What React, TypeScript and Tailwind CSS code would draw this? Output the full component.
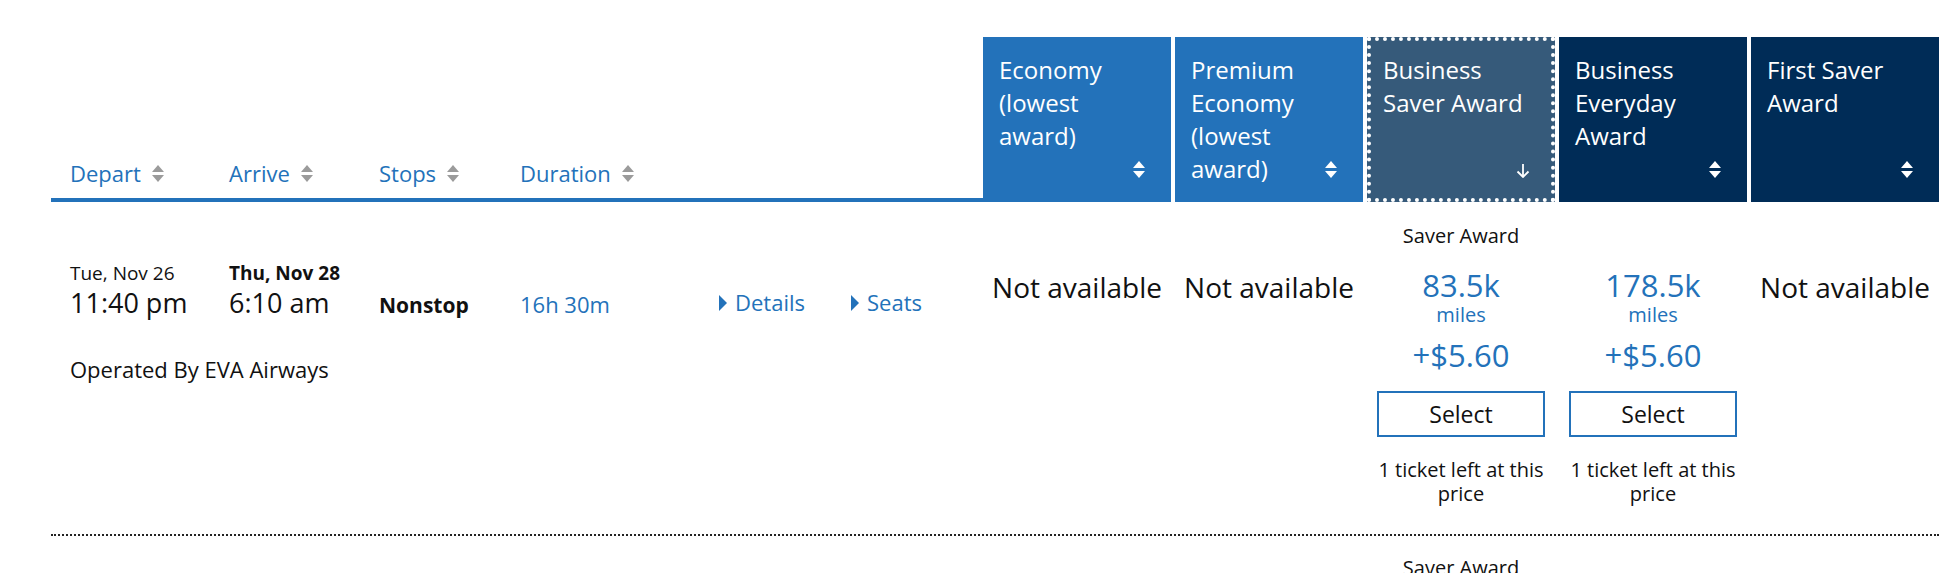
import type { ReactNode } from 'react'

const font = "font-['Open_Sans','Liberation_Sans',sans-serif]"

function SortIcon({ className }: { className?: string }) {
  return (
    <svg width="12" height="17" viewBox="0 0 12 17" fill="currentColor" className={className}>
      <path d="M6 0L12 7H0Z" />
      <path d="M0 10H12L6 17Z" />
    </svg>
  )
}

function DownArrow({ className }: { className?: string }) {
  return (
    <svg width="14" height="14" viewBox="0 0 14 14" fill="none" stroke="currentColor" strokeWidth="1.8" className={className}>
      <path d="M7 0V13" />
      <path d="M1.5 7.5L7 13L12.5 7.5" />
    </svg>
  )
}

function Caret() {
  return (
    <svg width="8" height="16" viewBox="0 0 8 16" fill="#2372ba" className="inline-block align-middle mr-[8px] relative -top-[2px]">
      <path d="M0 0L8 8L0 16Z" />
    </svg>
  )
}

type HeadProps = { children: ReactNode; tone: 'blue' | 'slate' | 'navy'; sorted?: boolean }

function HeadBox({ children, tone, sorted }: HeadProps) {
  const bg =
    tone === 'blue' ? 'bg-[#2372ba]' : tone === 'slate' ? 'bg-[#365a7a] border-4 border-dotted border-white' : 'bg-[#002c57]'
  return (
    <div
      className={`relative w-[188px] h-[165px] text-white text-[24px] leading-[33px] ${bg} ${
        tone === 'slate' ? 'px-[12px] pt-[12px]' : 'px-[16px] pt-[16px]'
      }`}
    >
      {children}
      {sorted ? (
        <DownArrow className="absolute right-[21px] bottom-[20px]" />
      ) : (
        <SortIcon className="absolute right-[26px] bottom-[24px]" />
      )}
    </div>
  )
}

function NotAvailable() {
  return (
    <div className="w-[188px] flex flex-col items-center pt-[67px]">
      <div className="text-[28px] leading-[36px] whitespace-nowrap text-[#111]">Not available</div>
    </div>
  )
}

function AwardCell({ miles, label }: { miles: string; label?: string }) {
  return (
    <div className={`w-[188px] flex flex-col items-center px-[10px] ${label ? 'pt-[20px]' : 'pt-[67px]'}`}>
      {label && <div className="text-[20px] leading-[28px] text-[#111] mb-[19px]">{label}</div>}
      <div className="text-[31px] leading-[32px] text-[#2372ba]">{miles}</div>
      <div className="mt-[2px] text-[20px] leading-[24px] text-[#2372ba]">miles</div>
      <div className="mt-[12px] text-[31px] leading-[32px] text-[#2372ba]">+$5.60</div>
      <button className="mt-[20px] w-[168px] h-[46px] border-2 border-[#2372ba] bg-white text-[23px] text-[#111]">
        Select
      </button>
      <div className="mt-[21px] text-[20px] leading-[24px] text-center text-[#111]">1 ticket left at this price</div>
    </div>
  )
}

const cols = 'grid grid-cols-[159px_150px_141px_199px_132px_1fr]'

export default function App() {
  const sortCols = ['Depart', 'Arrive', 'Stops', 'Duration']

  return (
    <div className={`${font} bg-white min-h-[573px] pl-[51px] pt-[37px]`}>
      {/* Column headers */}
      <div className="flex w-[1888px]">
        <div className="w-[932px] h-[165px] flex items-end border-b-4 border-[#2372ba] pb-[10px] pl-[19px]">
          <div className={`${cols} w-full`}>
            {sortCols.map(c => (
              <div key={c} className="inline-flex items-center text-[22px] leading-[30px] text-[#2372ba]">
                {c}
                <SortIcon className="ml-[11px] text-[#9b9b9b]" />
              </div>
            ))}
          </div>
        </div>
        <div className="flex gap-[4px]">
          <HeadBox tone="blue">Economy (lowest award)</HeadBox>
          <HeadBox tone="blue">Premium Economy (lowest award)</HeadBox>
          <HeadBox tone="slate" sorted>
            Business Saver Award
          </HeadBox>
          <HeadBox tone="navy">Business Everyday Award</HeadBox>
          <HeadBox tone="navy">First Saver Award</HeadBox>
        </div>
      </div>

      {/* Flight row */}
      <div className="flex w-[1888px] border-b-2 border-dotted border-[#222] pb-[28px]">
        <div className="w-[932px] pl-[19px] pt-[59px]">
          <div className={`${cols} items-baseline text-[#111]`}>
            <div className="text-[19px] leading-[24px]">Tue, Nov 26</div>
            <div className="text-[19px] leading-[24px] font-bold">Thu, Nov 28</div>
            <div className="col-span-4" />
            <div className="text-[27px] leading-[36px]">11:40 pm</div>
            <div className="text-[27px] leading-[36px]">6:10 am</div>
            <div className="text-[21px] font-bold">Nonstop</div>
            <div className="text-[22px] text-[#2372ba]">16h 30m</div>
            <div className="text-[22px] text-[#2372ba] relative -top-[2px]">
              <Caret />
              Details
            </div>
            <div className="text-[22px] text-[#2372ba] relative -top-[2px]">
              <Caret />
              Seats
            </div>
            <div className="col-span-6 mt-[32px] text-[22px] leading-[30px]">Operated By EVA Airways</div>
          </div>
        </div>
        <div className="flex gap-[4px]">
          <NotAvailable />
          <NotAvailable />
          <AwardCell miles="83.5k" label="Saver Award" />
          <AwardCell miles="178.5k" />
          <NotAvailable />
        </div>
      </div>

      {/* Next row (cut off) */}
      <div className="flex w-[1888px]">
        <div className="w-[932px]" />
        <div className="flex gap-[4px]">
          <div className="w-[188px]" />
          <div className="w-[188px]" />
          <div className="w-[188px] flex justify-center pt-[18px]">
            <div className="text-[20px] leading-[28px] text-[#111]">Saver Award</div>
          </div>
        </div>
      </div>
    </div>
  )
}
